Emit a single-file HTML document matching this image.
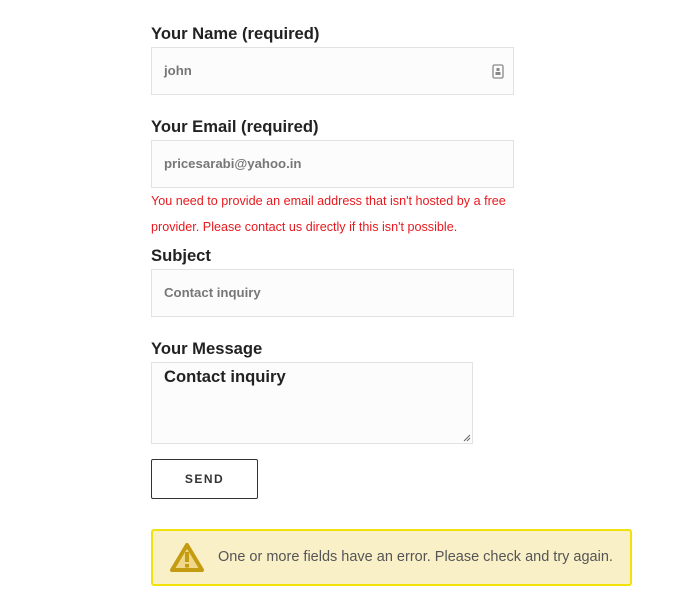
<!DOCTYPE html>
<html><head><style>
body{margin:0;width:696px;height:606px;background:#fff;font-family:"Liberation Sans",sans-serif;position:relative;overflow:hidden}
.a{position:absolute}
.l{left:151px;font-size:16.6px;font-weight:bold;color:#222;line-height:20px}
.i{left:151px;width:363px;height:46px;border:1px solid #e2e2e2;background:#fcfcfc;box-sizing:border-box;font-size:13.2px;font-weight:bold;color:#777;padding-left:12px;line-height:44px}
.e{left:151px;font-size:12.6px;color:#e8191e;line-height:26px}
</style></head><body>
<div class="a l" style="top:24px">Your Name (required)</div>
<div class="a i" style="top:47px;height:48px;line-height:46px">john
<svg class="a" style="right:9px;top:16px" width="12" height="15" viewBox="0 0 12 15"><rect x="1" y="1" width="10" height="13" rx="1.5" fill="none" stroke="#888" stroke-width="1.3"/><rect x="4.5" y="4" width="3" height="3" fill="#888"/><rect x="3.5" y="8" width="5" height="3" fill="#888"/></svg></div>
<div class="a l" style="top:117px">Your Email (required)</div>
<div class="a i" style="top:140px;height:48px;line-height:46px">pricesarabi@yahoo.in</div>
<div class="a e" style="top:188px">You need to provide an email address that isn't hosted by a free<br>provider. Please contact us directly if this isn't possible.</div>
<div class="a l" style="top:246px">Subject</div>
<div class="a i" style="top:269px;height:48px;line-height:46px">Contact inquiry</div>
<div class="a l" style="top:339px">Your Message</div>
<div class="a i" style="top:362px;width:322px;height:82px;line-height:20px;padding-top:4px;font-size:16.6px;color:#222">Contact inquiry
<svg class="a" style="right:1px;bottom:1px" width="8" height="8" viewBox="0 0 8 8"><path d="M7 1 L1 7 M7 4 L4 7" stroke="#666" stroke-width="1"/></svg></div>
<div class="a" style="left:151px;top:459px;width:107px;height:40px;border:1px solid #333;border-radius:2px;box-sizing:border-box;text-align:center;line-height:38px;font-size:12px;font-weight:bold;letter-spacing:1.5px;color:#333">SEND</div>
<div class="a" style="left:151px;top:529px;width:481px;height:57px;border:2px solid #f2e20a;border-radius:3px;background:#faf0c8;box-sizing:border-box">
<svg class="a" style="left:16px;top:11px" width="36" height="32" viewBox="0 0 36 32"><path d="M18 3 L33 28 H3 Z" fill="#f0d88a" stroke="#c49c12" stroke-width="4" stroke-linejoin="round"/><rect x="16" y="10" width="4" height="10" fill="#c49c12"/><rect x="16" y="22" width="4" height="3.5" fill="#c49c12"/></svg>
<div class="a" style="left:65px;top:0;line-height:53px;font-size:14.5px;color:#555">One or more fields have an error. Please check and try again.</div>
</div>
</body></html>
